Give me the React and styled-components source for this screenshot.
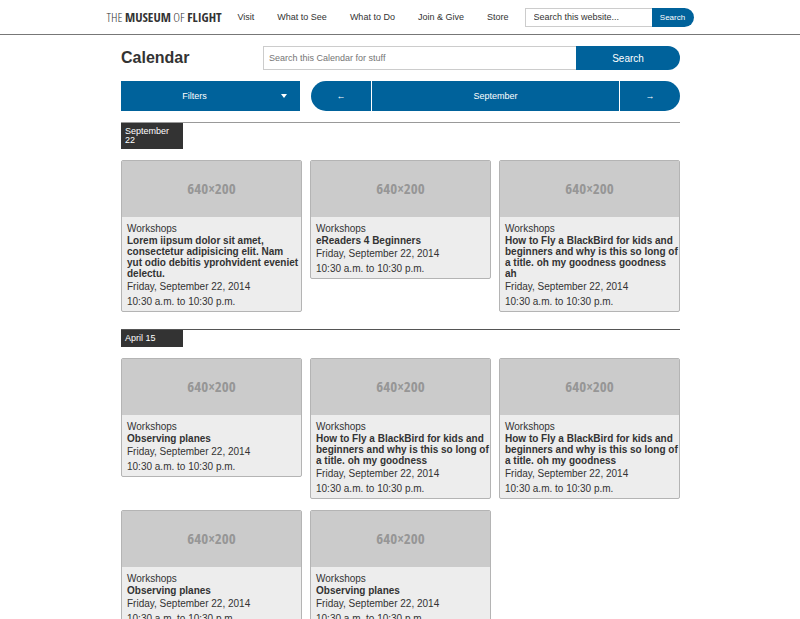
import React from "react";
import styled, { createGlobalStyle } from "styled-components";

const BLUE = "#00629b";
const INK = "#333333";
const CONDENSED = `"Open Sans Condensed", "Roboto Condensed", "Noto Sans Condensed", "Lato", sans-serif`;
const CONDENSED_LIGHT = `"Open Sans Condensed Light", "Open Sans Light Condensed", "Roboto Condensed Light", "Lato Light", "Lato", sans-serif`;

const GlobalStyle = createGlobalStyle`
  *, *::before, *::after { box-sizing: border-box; }
  body {
    margin: 0;
    background: #ffffff;
    color: ${INK};
    font-family: "Liberation Sans", Arial, Helvetica, sans-serif;
    font-size: 10px;
  }
  button, input { font-family: inherit; }
`;

const SiteHeader = styled.header`
  display: flex;
  justify-content: center;
  height: 35px;
  border-bottom: 1px solid #777777;
`;

const HeaderInner = styled.div`
  display: flex;
  align-items: center;
  width: 73%;
  min-width: 587px;
`;

const Logo = styled.a`
  width: 131px;
  color: ${INK};
  font-family: ${CONDENSED_LIGHT};
  font-size: 13px;
  font-weight: 300;
  line-height: 16px;
  text-decoration: none;
  white-space: nowrap;
`;

const LogoStrong = styled.b`
  font-family: ${CONDENSED};
  font-weight: 700;
`;

const Nav = styled.nav`
  display: flex;
  flex: 1;
  gap: 23px;
`;

const NavLink = styled.a`
  color: ${INK};
  font-size: 9px;
  line-height: 12px;
  text-decoration: none;
  white-space: nowrap;
`;

const SiteSearch = styled.form`
  display: flex;
  width: 169px;
  height: 19px;
`;

const SearchInput = styled.input`
  flex: 1;
  min-width: 0;
  margin: 0;
  padding: 0 ${(p) => (p.$compact ? 8 : 5)}px;
  border: 1px solid #cccccc;
  border-right: 0;
  border-radius: 0;
  outline: 0;
  background: #ffffff;
  color: ${INK};
  font-size: 9px;
  &::placeholder {
    color: ${(p) => (p.$compact ? INK : "#757575")};
    opacity: 1;
  }
`;

const SearchButton = styled.button`
  width: ${(p) => (p.$compact ? 42 : 104)}px;
  padding: 0;
  border: 0;
  border-radius: 0 12px 12px 0;
  background: ${BLUE};
  color: #ffffff;
  font-size: ${(p) => (p.$compact ? 8 : 10)}px;
  cursor: pointer;
`;

const Page = styled.main`
  width: 70%;
  min-width: 560px;
  margin: 0 auto;
  padding: 11px 0 0 1px;
`;

const TitleRow = styled.div`
  display: flex;
  align-items: center;
  height: 24px;
`;

const PageTitle = styled.h1`
  width: 142px;
  margin: 0;
  font-size: 16px;
  line-height: 24px;
`;

const CalendarSearch = styled.form`
  display: flex;
  flex: 1;
  height: 24px;
`;

const Controls = styled.div`
  display: flex;
  gap: 11px;
  height: 30px;
  margin-top: 11px;
`;

const FilterButton = styled.button`
  display: flex;
  align-items: center;
  width: 32%;
  padding: 0 13px;
  border: 0;
  background: ${BLUE};
  color: #ffffff;
  font-size: 9px;
  cursor: pointer;
`;

const FilterLabel = styled.span`
  flex: 1;
  padding-right: 26px;
  text-align: center;
`;

const Caret = styled.span`
  border: 3px solid transparent;
  border-top: 4px solid #ffffff;
  border-bottom: 0;
`;

const MonthNav = styled.div`
  display: flex;
  flex: 1;
  gap: 1px;
  border-radius: 15px;
  overflow: hidden;
`;

const MonthButton = styled.button`
  flex: ${(p) => (p.$wide ? "1" : "0 0 60px")};
  padding: 0;
  border: 0;
  background: ${BLUE};
  color: #ffffff;
  font-size: 9px;
  cursor: pointer;
`;

const DaySection = styled.section`
  margin-top: ${(p) => (p.$first ? 11 : 17)}px;
  border-top: 1px solid ${(p) => (p.$first ? "#999999" : "#555555")};
`;

const DayTag = styled.h2`
  width: 62px;
  margin: 0 0 11px;
  padding: 4px;
  background: ${INK};
  color: #ffffff;
  font-size: 9px;
  font-weight: 400;
  line-height: 9px;
`;

const CardGrid = styled.div`
  display: grid;
  grid-template-columns: repeat(3, 1fr);
  gap: 11px 8px;
  align-items: start;
`;

const Card = styled.article`
  border: 1px solid #b4b4b4;
  border-radius: 2px;
  background: #ededed;
  overflow: hidden;
`;

const Placeholder = styled.div`
  display: flex;
  align-items: center;
  justify-content: center;
  height: 56px;
  padding-bottom: 2px;
  background: #cbcbcb;
  color: #969696;
  font-family: ${CONDENSED};
  font-size: 15px;
  font-weight: 700;
`;

const CardBody = styled.div`
  padding: 5px 1px 2px 5px;
`;

const Category = styled.p`
  margin: 0;
  line-height: 13px;
`;

const EventTitle = styled.h3`
  margin: 0;
  font-size: 10px;
  line-height: 11px;
`;

const Detail = styled.p`
  margin: 0;
  line-height: 15px;
`;

const navItems = ["Visit", "What to See", "What to Do", "Join & Give", "Store"];

const blackbird =
  "How to Fly a BlackBird for kids and beginners and why is this so long of a title. oh my goodness";

const days = [
  {
    date: "September 22",
    events: [
      "Lorem iipsum dolor sit amet, consectetur adipisicing elit. Nam yut odio debitis yprohvident eveniet delectu.",
      "eReaders 4 Beginners",
      blackbird + " goodness ah",
    ],
  },
  {
    date: "April 15",
    events: ["Observing planes", blackbird, blackbird, "Observing planes", "Observing planes"],
  },
];

function EventCard({ title }) {
  return (
    <Card>
      <Placeholder>640×200</Placeholder>
      <CardBody>
        <Category>Workshops</Category>
        <EventTitle>{title}</EventTitle>
        <Detail>Friday, September 22, 2014</Detail>
        <Detail>10:30 a.m. to 10:30 p.m.</Detail>
      </CardBody>
    </Card>
  );
}

export default function App() {
  const stay = (e) => e.preventDefault();
  return (
    <>
      <GlobalStyle />
      <SiteHeader>
        <HeaderInner>
          <Logo href="#">
            THE <LogoStrong>MUSEUM</LogoStrong> OF <LogoStrong>FLIGHT</LogoStrong>
          </Logo>
          <Nav>
            {navItems.map((item) => (
              <NavLink key={item} href="#">
                {item}
              </NavLink>
            ))}
          </Nav>
          <SiteSearch onSubmit={stay}>
            <SearchInput $compact aria-label="Search this website" placeholder="Search this website..." />
            <SearchButton $compact>Search</SearchButton>
          </SiteSearch>
        </HeaderInner>
      </SiteHeader>
      <Page>
        <TitleRow>
          <PageTitle>Calendar</PageTitle>
          <CalendarSearch onSubmit={stay}>
            <SearchInput aria-label="Search this Calendar" placeholder="Search this Calendar for stuff" />
            <SearchButton>Search</SearchButton>
          </CalendarSearch>
        </TitleRow>
        <Controls>
          <FilterButton>
            <FilterLabel>Filters</FilterLabel>
            <Caret />
          </FilterButton>
          <MonthNav>
            <MonthButton aria-label="Previous month">←</MonthButton>
            <MonthButton $wide>September</MonthButton>
            <MonthButton aria-label="Next month">→</MonthButton>
          </MonthNav>
        </Controls>
        {days.map((day, i) => (
          <DaySection key={day.date} $first={i === 0}>
            <DayTag>{day.date}</DayTag>
            <CardGrid>
              {day.events.map((title, n) => (
                <EventCard key={n} title={title} />
              ))}
            </CardGrid>
          </DaySection>
        ))}
      </Page>
    </>
  );
}
